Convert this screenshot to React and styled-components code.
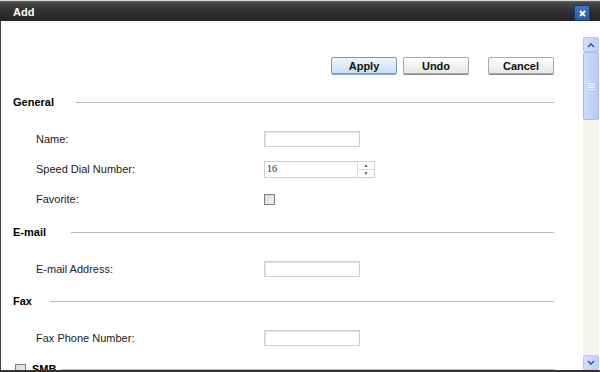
import React from 'react'
import styled, { createGlobalStyle } from 'styled-components'

const Global = createGlobalStyle`
  html, body { margin: 0; padding: 0; background: #fff; overflow: hidden; }
  body { font-family: "Liberation Sans", Tahoma, Arial, sans-serif; font-size: 11px; color: #000; }
`

const Page = styled.div`
  width: 600px;
  height: 372px;
  display: flex;
  flex-direction: column;
  background: #fff;
`

const Strip = styled.div`
  height: 1px;
  background: #d9d9d9;
`

const TitleBar = styled.div`
  height: 20px;
  display: flex;
  align-items: center;
  justify-content: space-between;
  padding: 0 10px 0 13px;
  background: linear-gradient(#4b4b4b, #2f2f2f 50%, #242424);
  border-top: 1px solid #626262;
  box-sizing: border-box;
`

const Title = styled.span`
  color: #fff;
  font-weight: bold;
  font-size: 11px;
`

const Close = styled.div`
  width: 16px;
  height: 16px;
  margin-top: 3px;
  box-sizing: border-box;
  border: 1px solid #163e6c;
  background: linear-gradient(#3b7cc2, #235f9f);
  display: flex;
  align-items: center;
  justify-content: center;
`

const Body = styled.div`
  flex: 1;
  display: flex;
  border-left: 1px solid #444;
  border-bottom: 2px solid #333;
  overflow: hidden;
`

const Content = styled.div`
  flex: 1;
  padding: 36px 29px 0 12px;
  overflow: hidden;
`

const Toolbar = styled.div`
  display: flex;
  justify-content: flex-end;
  margin-bottom: 18px;
`

const Button = styled.button`
  width: 66px;
  height: 17px;
  margin-left: ${p => p.$gap}px;
  padding: 0;
  font-family: "Liberation Sans", Tahoma, Arial, sans-serif;
  font-size: 11px;
  font-weight: bold;
  color: #111;
  border: 1px solid ${p => (p.$primary ? '#6f9ed3' : '#a7a7a7')};
  border-radius: 2px;
  box-shadow: 0 1px 0 ${p => (p.$primary ? '#8aa8c8' : '#888')};
  background: ${p =>
    p.$primary
      ? 'linear-gradient(#eef6fe, #c7dff5)'
      : 'linear-gradient(#ffffff, #e6e6e6)'};
`

const Section = styled.div`
  margin-bottom: ${p => p.$after}px;
`

const Header = styled.div`
  height: 20px;
  display: flex;
  align-items: center;
  gap: ${p => p.$gap}px;
  font-weight: bold;
  margin-bottom: 12px;
  padding-left: ${p => p.$indent || 0}px;
`

const Rule = styled.div`
  flex: 1;
  height: 1px;
  background: #b9b9b9;
`

const Row = styled.div`
  height: 30px;
  display: grid;
  grid-template-columns: 228px auto;
  align-items: center;
  padding-left: 23px;
  color: #222;
`

const Input = styled.div`
  width: 96px;
  height: 16px;
  box-sizing: border-box;
  border: 1px solid #cfcfcf;
  box-shadow: inset 1px 1px 0 #e4e4e4;
  background: #fff;
`

const Spin = styled.div`
  width: 111px;
  height: 17px;
  box-sizing: border-box;
  border: 1px solid #cfcfcf;
  display: flex;
`

const SpinValue = styled.div`
  flex: 1;
  font-family: "Liberation Serif", serif;
  font-size: 10px;
  padding: 1px 2px;
`

const SpinArrows = styled.div`
  width: 16px;
  border-left: 1px solid #dcdcdc;
  display: flex;
  flex-direction: column;
  font-size: 5px;
  color: #555;
  div {
    flex: 1;
    display: flex;
    align-items: center;
    justify-content: center;
  }
  div + div { border-top: 1px solid #dcdcdc; }
`

const Check = styled.div`
  width: 11px;
  height: 11px;
  box-sizing: border-box;
  border: 1px solid #7d7d7d;
  background: linear-gradient(135deg, #d6d6d6, #f5f5f5);
`

const Scrollbar = styled.div`
  width: 16px;
  margin: 16px 1px 0 0;
  display: flex;
  flex-direction: column;
  background: #f4f3ee;
`

const ScrollBtn = styled.div`
  height: 15px;
  box-sizing: border-box;
  border: 1px solid #b7c8ee;
  border-radius: 2px;
  background: linear-gradient(90deg, #d3e0fd, #b9cdf8);
  display: flex;
  align-items: center;
  justify-content: center;
`

const Thumb = styled.div`
  height: 68px;
  box-sizing: border-box;
  border: 1px solid #a8bdea;
  border-radius: 2px;
  background: linear-gradient(90deg, #cddbfc, #b8cbf6);
  display: flex;
  align-items: center;
  justify-content: center;
`

const Track = styled.div`
  flex: 1;
`

const Chevron = ({ up }) => (
  <svg width="8" height="6" viewBox="0 0 8 6">
    <path d={up ? 'M1 5 L4 2 L7 5' : 'M1 1 L4 4 L7 1'} stroke="#4d6185" strokeWidth="1.6" fill="none" />
  </svg>
)

const Grip = () => (
  <svg width="7" height="7" viewBox="0 0 7 7">
    <path d="M0 .5H7M0 2.5H7M0 4.5H7M0 6.5H7" stroke="#eef3ff" />
  </svg>
)

export default function App() {
  return (
    <Page>
      <Global />
      <Strip />
      <TitleBar>
        <Title>Add</Title>
        <Close>
          <svg width="7" height="7" viewBox="0 0 7 7">
            <path d="M1 1L6 6M6 1L1 6" stroke="#fff" strokeWidth="1.8" />
          </svg>
        </Close>
      </TitleBar>
      <Body>
        <Content>
          <Toolbar>
            <Button $primary $gap={0}>Apply</Button>
            <Button $gap={6}>Undo</Button>
            <Button $gap={19}>Cancel</Button>
          </Toolbar>
          <Section $after={8}>
            <Header $gap={22}>General<Rule /></Header>
            <Row>Name:<Input /></Row>
            <Row>
              Speed Dial Number:
              <Spin>
                <SpinValue>16</SpinValue>
                <SpinArrows><div>▲</div><div>▼</div></SpinArrows>
              </Spin>
            </Row>
            <Row>Favorite:<Check /></Row>
          </Section>
          <Section $after={7}>
            <Header $gap={25}>E-mail<Rule /></Header>
            <Row>E-mail Address:<Input /></Row>
          </Section>
          <Section $after={6}>
            <Header $gap={18}>Fax<Rule /></Header>
            <Row>Fax Phone Number:<Input /></Row>
          </Section>
          <Header $gap={6} $indent={2}>
            <Check />SMB<Rule />
          </Header>
        </Content>
        <Scrollbar>
          <ScrollBtn><Chevron up /></ScrollBtn>
          <Thumb><Grip /></Thumb>
          <Track />
          <ScrollBtn><Chevron /></ScrollBtn>
        </Scrollbar>
      </Body>
    </Page>
  )
}
